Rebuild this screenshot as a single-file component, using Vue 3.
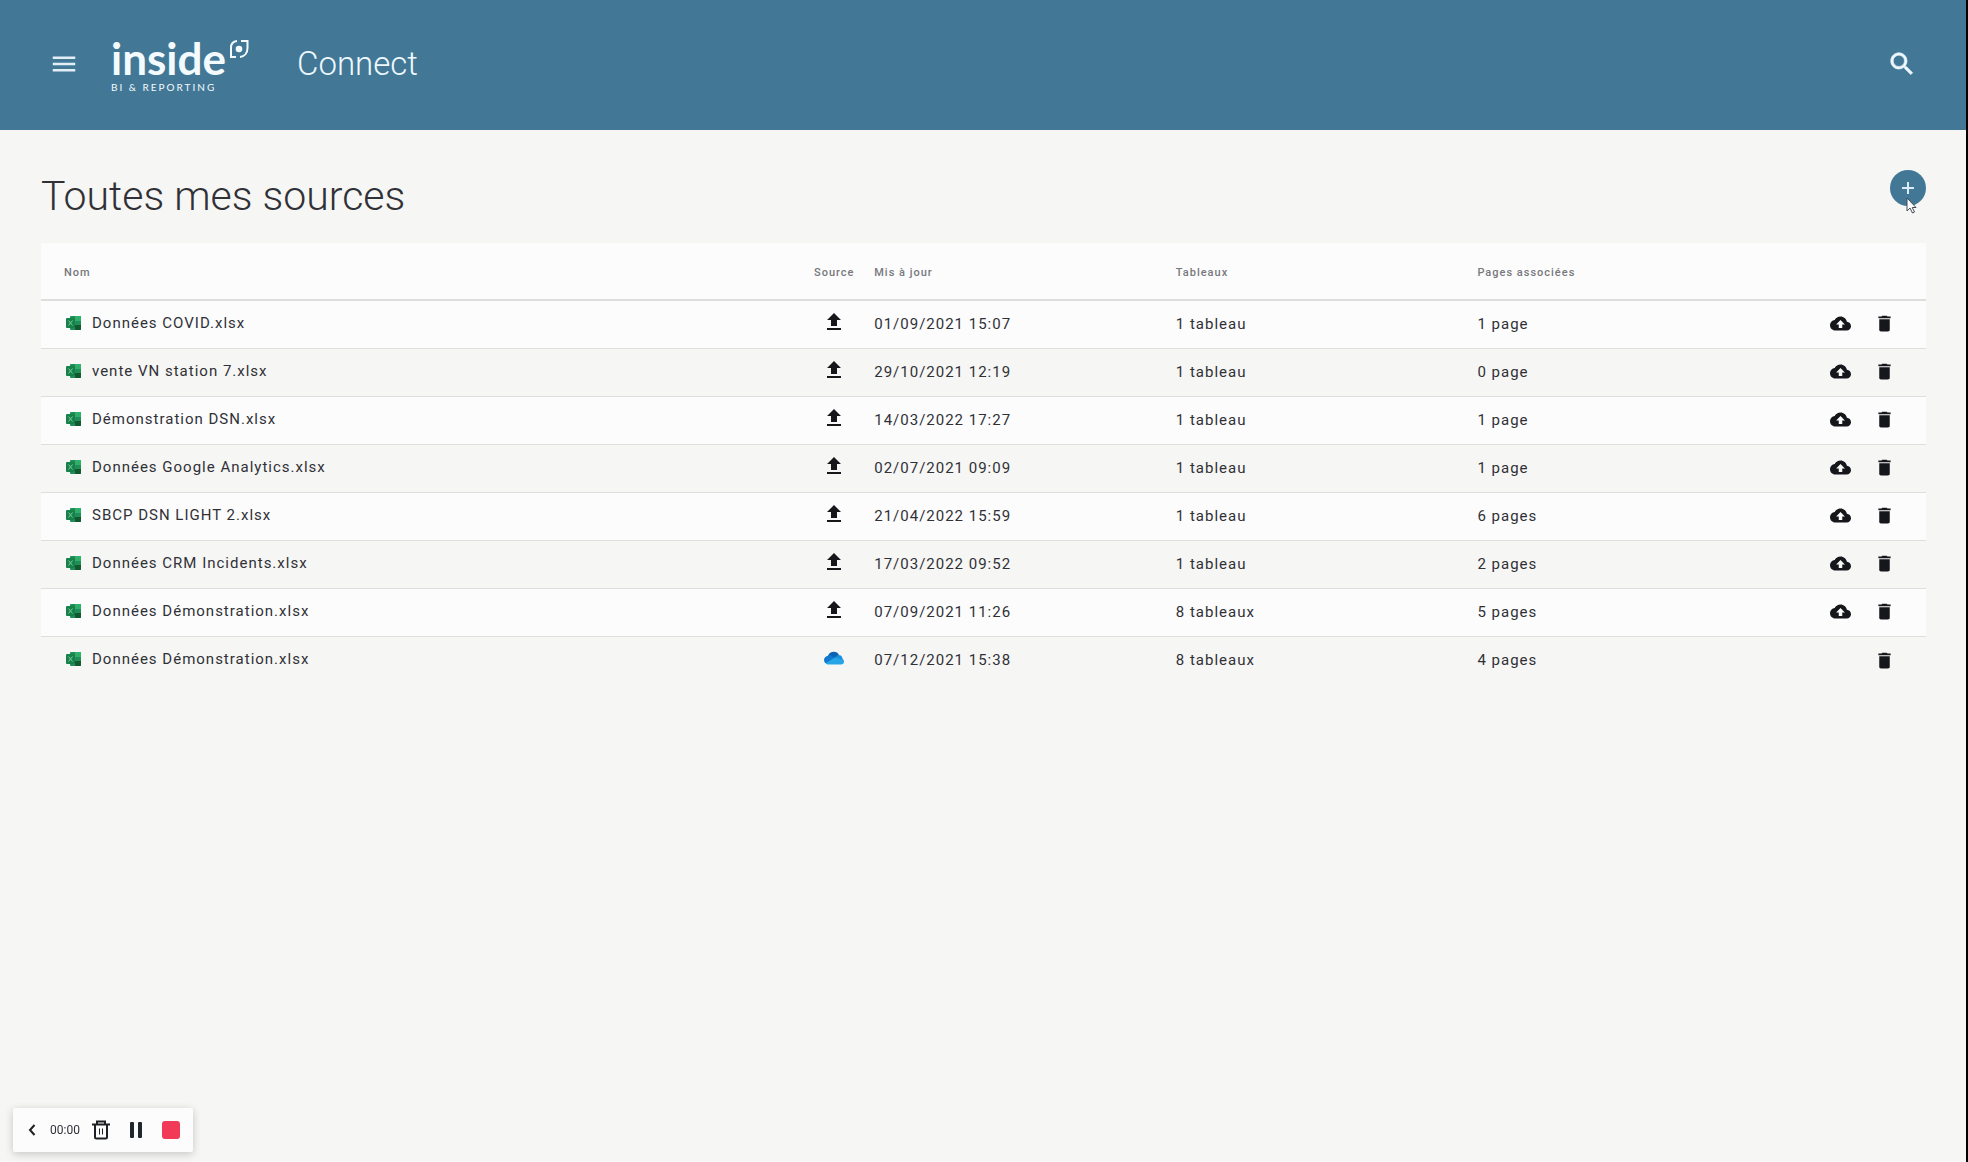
<script setup>
const rows = [
  { name: 'Données COVID.xlsx', date: '01/09/2021 15:07', tables: '1 tableau', pages: '1 page', source: 'upload' },
  { name: 'vente VN station 7.xlsx', date: '29/10/2021 12:19', tables: '1 tableau', pages: '0 page', source: 'upload' },
  { name: 'Démonstration DSN.xlsx', date: '14/03/2022 17:27', tables: '1 tableau', pages: '1 page', source: 'upload' },
  { name: 'Données Google Analytics.xlsx', date: '02/07/2021 09:09', tables: '1 tableau', pages: '1 page', source: 'upload' },
  { name: 'SBCP DSN LIGHT 2.xlsx', date: '21/04/2022 15:59', tables: '1 tableau', pages: '6 pages', source: 'upload' },
  { name: 'Données CRM Incidents.xlsx', date: '17/03/2022 09:52', tables: '1 tableau', pages: '2 pages', source: 'upload' },
  { name: 'Données Démonstration.xlsx', date: '07/09/2021 11:26', tables: '8 tableaux', pages: '5 pages', source: 'upload' },
  { name: 'Données Démonstration.xlsx', date: '07/12/2021 15:38', tables: '8 tableaux', pages: '4 pages', source: 'onedrive' },
]
</script>

<template>
  <div class="page">
    <header class="topbar">
      <button class="icon-btn" type="button" aria-label="Menu">
        <svg width="30" height="30" viewBox="0 0 24 24" fill="#e4eef8"><path d="M3 18h18v-2H3v2zm0-5h18v-2H3v2zm0-7v2h18V6H3z" /></svg>
      </button>
      <a class="logo" href="#" aria-label="inside BI &amp; Reporting">
        <span class="logo-name">inside</span>
        <span class="logo-tag">BI &amp; REPORTING</span>
        <svg class="logo-mark" width="20" height="20" viewBox="0 0 20 20" fill="none" stroke="#f4fbff" stroke-width="2">
          <path d="M8 2C4 2.500 2 5 2 8.500V18h5" />
          <path d="M12 2h6.500v7c0 5-3 8.500-7.500 9" />
          <circle cx="10" cy="10" r="3.300" fill="#f4fbff" stroke="none" />
        </svg>
      </a>
      <span class="app-name">Connect</span>
      <button class="icon-btn search" type="button" aria-label="Rechercher">
        <svg width="30" height="30" viewBox="0 0 24 24" fill="#eef8ff" stroke="#eef8ff" stroke-width="0.500"><path d="M15.500 14h-.79l-.28-.27C15.410 12.590 16 11.110 16 9.500 16 5.910 13.090 3 9.500 3S3 5.910 3 9.500 5.910 16 9.500 16c1.610 0 3.090-.59 4.230-1.570l.27.28v.79l5 4.990L20.490 19l-4.990-5zm-6 0C7.010 14 5 11.990 5 9.500S7.010 5 9.500 5 14 7.010 14 9.500 11.990 14 9.500 14z" /></svg>
      </button>
    </header>

    <main class="content">
      <div class="heading">
        <h1>Toutes mes sources</h1>
        <div class="add-wrap">
          <button class="add" type="button" aria-label="Ajouter une source">
            <svg width="20" height="20" viewBox="0 0 20 20" stroke="#dcebfa" stroke-width="2"><path d="M10 4v12M4 10h12" /></svg>
          </button>
          <svg class="pointer" width="12" height="18" viewBox="0 0 12 18"><path d="M1 1v13l3-3 2.500 5 2-1-2.300-4.500H10z" fill="#fff" stroke="#444a55" stroke-width="1" /></svg>
        </div>
      </div>

      <table>
        <thead>
          <tr>
            <th class="c-name" scope="col">Nom</th>
            <th class="c-source" scope="col">Source</th>
            <th class="c-data" scope="col">Mis à jour</th>
            <th class="c-data" scope="col">Tableaux</th>
            <th class="c-data" scope="col">Pages associées</th>
            <td class="c-actions"></td>
          </tr>
        </thead>
        <tbody>
          <tr v-for="(row, i) in rows" :key="i">
            <td class="c-name">
              <div class="file">
                <svg width="16" height="16" viewBox="0 0 16 16">
                  <rect x="4" y="1" width="11" height="14" rx="1" fill="#1f8f55" />
                  <path d="M9 1h5a1 1 0 0 1 1 1v4H9z" fill="#2fae6c" />
                  <path d="M9 10h6v4a1 1 0 0 1-1 1H9z" fill="#12592f" />
                  <rect x="0" y="3" width="9" height="10" rx="1" fill="#15824a" />
                  <path d="M2.500 5.500l4 5M6.500 5.500l-4 5" stroke="#7fc9a0" stroke-width="1" />
                </svg>
                <span>{{ row.name }}</span>
              </div>
            </td>
            <td class="c-source">
              <svg v-if="row.source === 'upload'" width="24" height="24" viewBox="0 0 24 24" fill="#16171b"><path d="M9 16h6v-6h4l-7-7-7 7h4zm-4 2h14v2H5z" /></svg>
              <svg v-else width="20" height="24" viewBox="0 0 20 24">
                <path d="M4 10a6 6 0 0 1 11-1l-3 7H3z" fill="#0a63b5" />
                <path d="M4.500 9.500C1.500 10 0 12 0 14c0 2.500 2 4 4 4l8-5-4-3c-1-.7-2-.8-3.500-.5z" fill="#1079cc" />
                <path d="M10 12l4-3c3 0 4 1 4.500 3.500L20 15l-6 2z" fill="#1690dc" />
                <path d="M2 17l9-5.500 7 2c3 1 2.500 5-1 5H4c-.8 0-1.500-.4-2-1.500z" fill="#27a5e6" />
              </svg>
            </td>
            <td class="c-data">{{ row.date }}</td>
            <td class="c-data">{{ row.tables }}</td>
            <td class="c-data">{{ row.pages }}</td>
            <td class="c-actions">
              <div class="actions">
                <button v-if="row.source === 'upload'" class="icon-btn" type="button" aria-label="Mettre à jour">
                  <svg width="21" height="21" viewBox="0 0 24 24" fill="#16171b"><path d="M19.350 10.040C18.670 6.590 15.640 4 12 4 9.110 4 6.600 5.640 5.350 8.040 2.340 8.360 0 10.910 0 14c0 3.310 2.690 6 6 6h13c2.760 0 5-2.240 5-5 0-2.640-2.050-4.780-4.650-4.960zM14 13v4h-4v-4H7l5-5 5 5h-3z" /></svg>
                </button>
                <button class="icon-btn" type="button" aria-label="Supprimer">
                  <svg width="21" height="21" viewBox="0 0 24 24" fill="#16171b"><path d="M6 19c0 1.100.9 2 2 2h8c1.100 0 2-.9 2-2V7H6v12zM19 4h-3.500l-1-1h-5l-1 1H5v2h14V4z" /></svg>
                </button>
              </div>
            </td>
          </tr>
        </tbody>
      </table>
    </main>

    <div class="recorder">
      <div class="recorder-time">
        <button class="icon-btn" type="button" aria-label="Réduire">
          <svg width="12" height="20" viewBox="0 0 12 20" fill="none" stroke="#1d2024" stroke-width="2"><path d="M8.500 5L4 10l4.500 5" /></svg>
        </button>
        <span class="time">00:00</span>
        <button class="icon-btn" type="button" aria-label="Supprimer l'enregistrement">
          <svg width="18" height="20" viewBox="0 0 18 20" fill="none" stroke="#1d2024" stroke-width="2"><path d="M0 4.500h18M5 4V1.500h8V4M3 5v12a1.500 1.500 0 0 0 1.500 1.500h9A1.500 1.500 0 0 0 15 17V5" /><path d="M7.500 8.500v6M10.500 8.500v6" stroke-width="1" /></svg>
        </button>
      </div>
      <button class="icon-btn" type="button" aria-label="Pause">
        <svg width="14" height="20" viewBox="0 0 14 20" fill="#20282c"><rect x="1" y="2" width="4" height="16" rx="1" /><rect x="9" y="2" width="4" height="16" rx="1" /></svg>
      </button>
      <button class="stop" type="button" aria-label="Arrêter"></button>
    </div>
  </div>
</template>

<style>
body {
  background: #f6f6f5;
}
</style>

<style scoped>
.page {
  box-sizing: border-box;
  min-height: 100vh;
  border-right: 2px solid #000;
  font-family: Roboto, sans-serif;
  color: #303136;
}
.topbar {
  box-sizing: border-box;
  height: 130px;
  padding: 0 49px 2px;
  display: flex;
  align-items: center;
  background: #427896;
  color: #eef8ff;
}
.icon-btn {
  display: flex;
  padding: 0;
  border: 0;
  background: none;
}
.logo {
  position: relative;
  width: 138px;
  margin-left: 32px;
  display: flex;
  flex-direction: column;
  color: #f4fbff;
  text-decoration: none;
}
.logo-name {
  font: 700 44px/46px Lato, sans-serif;
}
.logo-tag {
  font: 400 10px/12px Lato, sans-serif;
  letter-spacing: 2px;
}
.logo-mark {
  position: absolute;
  top: 4px;
  right: 0;
}
.app-name {
  margin-left: 48px;
  font-size: 33px;
  font-weight: 300;
  line-height: 40px;
}
.search {
  margin-left: auto;
}
.content {
  padding: 40px 40px 40px 41px;
}
.heading {
  display: flex;
  justify-content: space-between;
  margin-bottom: 21px;
}
h1 {
  margin: 0;
  font-size: 41px;
  font-weight: 300;
  line-height: 52px;
}
.add-wrap {
  position: relative;
  height: 36px;
}
.add {
  display: flex;
  align-items: center;
  justify-content: center;
  width: 36px;
  height: 36px;
  padding: 0;
  border: 0;
  border-radius: 50%;
  background: #427896;
}
.pointer {
  position: absolute;
  left: 16px;
  top: 27px;
}
table {
  width: 100%;
  table-layout: fixed;
  border-collapse: separate;
  border-spacing: 0;
}
th,
td {
  box-sizing: border-box;
  padding: 0 10px;
  text-align: left;
}
thead th,
thead td {
  height: 58px;
  padding-top: 2px;
  border-bottom: 2px solid #dededc;
  background: #fcfcfd;
  color: #77787c;
  font-size: 11px;
  font-weight: 500;
  letter-spacing: 1px;
}
tbody td {
  height: 48px;
  padding-bottom: 2px;
  border-bottom: 1px solid #dededc;
  font-size: 15px;
  letter-spacing: 1px;
}
tbody tr:nth-child(odd) td {
  background: #fcfcfd;
}
tbody tr:last-child td {
  border-bottom: 0;
}
th.c-name,
td.c-name {
  padding-left: 23px;
}
th.c-source,
td.c-source {
  width: 60px;
  padding-left: 0;
  padding-right: 0;
  text-align: center;
}
td.c-name {
  padding-bottom: 4px;
}
td.c-source {
  padding-bottom: 6px;
}
.c-source svg {
  display: block;
  margin: 0 auto;
}
.c-data {
  width: 16%;
}
.c-actions {
  width: 157px;
}
td.c-actions {
  padding-right: 31px;
}
.file {
  display: flex;
  align-items: center;
  gap: 10px;
  padding-left: 2px;
}
.actions {
  display: flex;
  justify-content: flex-end;
  gap: 23px;
}
.recorder {
  position: fixed;
  left: 13px;
  bottom: 10px;
  box-sizing: border-box;
  height: 44px;
  padding: 0 13px;
  display: flex;
  align-items: center;
  gap: 19px;
  border-radius: 2px;
  background: #fcfcfd;
  box-shadow: 0 2px 8px rgba(0, 0, 0, 0.2);
}
.recorder-time {
  display: flex;
  align-items: center;
  gap: 12px;
}
.time {
  font-size: 12px;
}
.stop {
  width: 18px;
  height: 18px;
  padding: 0;
  border: 0;
  border-radius: 3px;
  background: #f03a58;
}
</style>
